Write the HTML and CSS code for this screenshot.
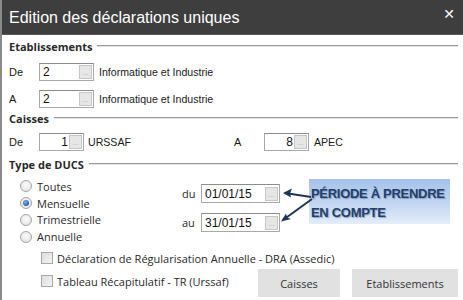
FILE: index.html
```html
<!DOCTYPE html>
<html>
<head>
<meta charset="utf-8">
<link rel="stylesheet" href="styles.css">
</head>
<body>
<div class="dialog">
  <div class="titlebar">
    <span class="title">Edition des déclarations uniques</span>
    <span class="close">✕</span>
  </div>
  <div class="content">
    <div class="legend legend-1"><span>Etablissements</span><i class="rule"></i></div>
    <div class="row row-e1">
      <span class="lbl">De</span>
      <div class="field f-etab"><span class="val">2</span><span class="dots">...</span></div>
      <span class="desc">Informatique et Industrie</span>
    </div>
    <div class="row row-e2">
      <span class="lbl">A</span>
      <div class="field f-etab"><span class="val">2</span><span class="dots">...</span></div>
      <span class="desc">Informatique et Industrie</span>
    </div>

    <div class="legend legend-2"><span>Caisses</span><i class="rule"></i></div>
    <div class="row row-c">
      <span class="lbl">De</span>
      <div class="field f-caisse"><span class="val right">1</span><span class="dots">...</span></div>
      <span class="desc d-urssaf">URSSAF</span>
      <span class="lbl lbl-a">A</span>
      <div class="field f-caisse"><span class="val right">8</span><span class="dots">...</span></div>
      <span class="desc">APEC</span>
    </div>

    <div class="legend legend-3"><span>Type de DUCS</span><i class="rule"></i></div>
    <div class="ducs">
      <div class="radios">
        <div class="radio r1"><i class="circle"></i><span>Toutes</span></div>
        <div class="radio r2"><i class="circle on"></i><span>Mensuelle</span></div>
        <div class="radio r3"><i class="circle"></i><span>Trimestrielle</span></div>
        <div class="radio r4"><i class="circle"></i><span>Annuelle</span></div>
      </div>
      <div class="dates">
        <div class="drow d1"><span class="dl">du</span><div class="field f-date"><span class="val">01/01/15</span><span class="dots">...</span></div></div>
        <div class="drow d2"><span class="dl">au</span><div class="field f-date"><span class="val">31/01/15</span><span class="dots">...</span></div></div>
      </div>
      <div class="callout">PÉRIODE À PRENDRE<br>EN COMPTE</div>
    </div>
    <div class="check c1"><i class="box"></i><span>Déclaration de Régularisation Annuelle - DRA (Assedic)</span></div>
    <div class="bottom">
      <div class="check c2"><i class="box"></i><span>Tableau Récapitulatif - TR (Urssaf)</span></div>
      <div class="buttons">
        <div class="btn b-caisses">Caisses</div>
        <div class="btn b-etab">Etablissements</div>
      </div>
    </div>
  </div>
  <svg class="arrows" width="463" height="300" viewBox="0 0 463 300">
    <line x1="311" y1="197" x2="285" y2="193" stroke="#1e3557" stroke-width="2"/>
    <path d="M283,193 L292,188.5 L290,193.5 L291,197.5 Z" fill="#1e3557"/>
    <line x1="312" y1="199" x2="283" y2="220" stroke="#1e3557" stroke-width="2"/>
    <path d="M281,221.5 L286,213.5 L287,217.5 L291,219 Z" fill="#1e3557"/>
  </svg>
</div>
</body>
</html>
```

FILE: styles.css
```css
html, body {
  margin: 0;
  padding: 0;
  background: #ffffff;
}
.dialog {
  width: 463px;
  height: 300px;
  box-sizing: border-box;
  border-left: 2px solid #8a8a8a;
  position: relative;
  overflow: hidden;
  font-family: "Liberation Sans", Arial, sans-serif;
  color: #1a1a1a;
}
.titlebar {
  height: 35px;
  background: #3e3e3e;
  border-bottom: 1px solid #5a5a5a;
  box-sizing: border-box;
  display: flex;
  align-items: center;
  justify-content: space-between;
  padding: 1px 8px 0 7px;
  color: #ffffff;
}
.title {
  font-family: "Liberation Sans", Arial, sans-serif;
  font-size: 16px;
}
.close {
  font-family: "DejaVu Sans", sans-serif;
  font-weight: bold;
  font-size: 14px;
  margin-top: -8px;
}
.content {
  padding-left: 7px;
  padding-right: 5px;
}
.legend {
  display: flex;
  align-items: center;
  height: 16px;
  font-family: "Open Sans", "Noto Sans", sans-serif;
  font-weight: bold;
  font-size: 11px;
  color: #2a2a2a;
}
.legend .rule {
  flex: 1;
  height: 0;
  border-top: 1px solid #9a9a9a;
  border-bottom: 1px solid #e2e2e2;
  margin-left: 5px;
}
.legend-1 { margin-top: 3px; }
.legend-2 { margin-top: 2px; }
.legend-3 { margin-top: 5px; }
.row {
  display: flex;
  align-items: center;
  height: 18px;
  font-size: 11px;
}
.row-e1 { margin-top: 9px; }
.row-e2 { margin-top: 9px; }
.row-c { margin-top: 7px; }
.lbl {
  width: 28px;
  font-size: 11px;
}
.lbl-a {
  margin-left: 103px;
}
.field {
  height: 18px;
  box-sizing: border-box;
  border: 1px solid #a8a8a8;
  border-top-color: #8c8c8c;
  background: #fff;
  display: flex;
  align-items: center;
  padding: 0 1px 0 3px;
  font-size: 12px;
  color: #111;
}
.field .val {
  flex: 1;
}
.field .val.right {
  text-align: right;
  padding-right: 1px;
}
.dots {
  width: 13px;
  height: 14px;
  box-sizing: border-box;
  background: #e6e6e6;
  border: 1px solid #c6c6c6;
  color: #b4b4b4;
  font-size: 8px;
  line-height: 14px;
  text-align: center;
}
.f-etab { width: 55px; margin-left: 2px; }
.f-caisse { width: 45px; margin-left: 2px; }
.desc {
  margin-left: 5px;
  font-size: 10.6px;
  color: #1a1a1a;
}
.d-urssaf { margin-left: 4px; }
.ducs {
  display: flex;
  height: 73px;
}
.radios {
  width: 173px;
  padding-left: 11px;
  padding-top: 6px;
  box-sizing: border-box;
}
.radio {
  display: flex;
  align-items: center;
  height: 16.8px;
  font-family: "Open Sans", "Noto Sans", sans-serif;
  font-size: 11px;
  color: #2a2a2a;
}
.circle {
  width: 12px;
  height: 12px;
  box-sizing: border-box;
  border-radius: 50%;
  border: 1px solid #a4a4a4;
  background: radial-gradient(circle at 50% 40%, #fbfbfb 0%, #e0e0e0 100%);
  margin-right: 5px;
  position: relative;
}
.circle.on::after {
  content: "";
  position: absolute;
  left: 2px;
  top: 2px;
  width: 6px;
  height: 6px;
  border-radius: 50%;
  background: radial-gradient(circle at 40% 35%, #7fb3ea 0%, #1d5fb3 70%, #164a8f 100%);
}
.dates {
  width: 127px;
  padding-top: 12px;
  box-sizing: border-box;
}
.drow {
  display: flex;
  align-items: center;
  height: 19px;
}
.d2 { margin-top: 10px; }
.dl {
  width: 19px;
  font-family: "Open Sans", "Noto Sans", sans-serif;
  font-size: 11px;
  color: #2a2a2a;
}
.f-date {
  width: 79px;
  height: 19px;
}
.callout {
  margin-top: 7px;
  width: 141px;
  height: 45px;
  box-sizing: border-box;
  padding: 5px 0 0 2px;
  background: linear-gradient(to bottom, #a5c2ea 0%, #c3d6f2 55%, #e4edf9 100%);
  font-family: "Liberation Sans", Arial, sans-serif;
  font-weight: bold;
  font-size: 13px;
  line-height: 19px;
  letter-spacing: -0.3px;
  color: #1f3f6d;
  text-shadow: 1px 1px 1px rgba(90, 110, 140, 0.55);
}
.arrows {
  position: absolute;
  left: -2px;
  top: 0;
  pointer-events: none;
}
.check {
  display: flex;
  align-items: center;
  height: 18px;
  font-family: "Open Sans", "Noto Sans", sans-serif;
  font-size: 11px;
  color: #2a2a2a;
  padding-left: 32px;
}
.c1 { margin-top: 4px; }
.box {
  width: 12px;
  height: 12px;
  box-sizing: border-box;
  border: 1px solid #a8a8a8;
  background: linear-gradient(to bottom right, #dcdcdc, #f4f4f4);
  margin-right: 4px;
}
.bottom {
  display: flex;
  align-items: flex-start;
  justify-content: space-between;
  margin-top: 5px;
}
.c2 { margin-top: 0; }
.buttons {
  display: flex;
  gap: 12px;
  margin-top: -3px;
}
.btn {
  height: 28px;
  background: #e1e1e1;
  display: flex;
  align-items: center;
  justify-content: center;
  font-family: "Open Sans", "Noto Sans", sans-serif;
  font-size: 11px;
  color: #333;
}
.b-caisses { width: 82px; }
.b-etab { width: 106px; }
```
